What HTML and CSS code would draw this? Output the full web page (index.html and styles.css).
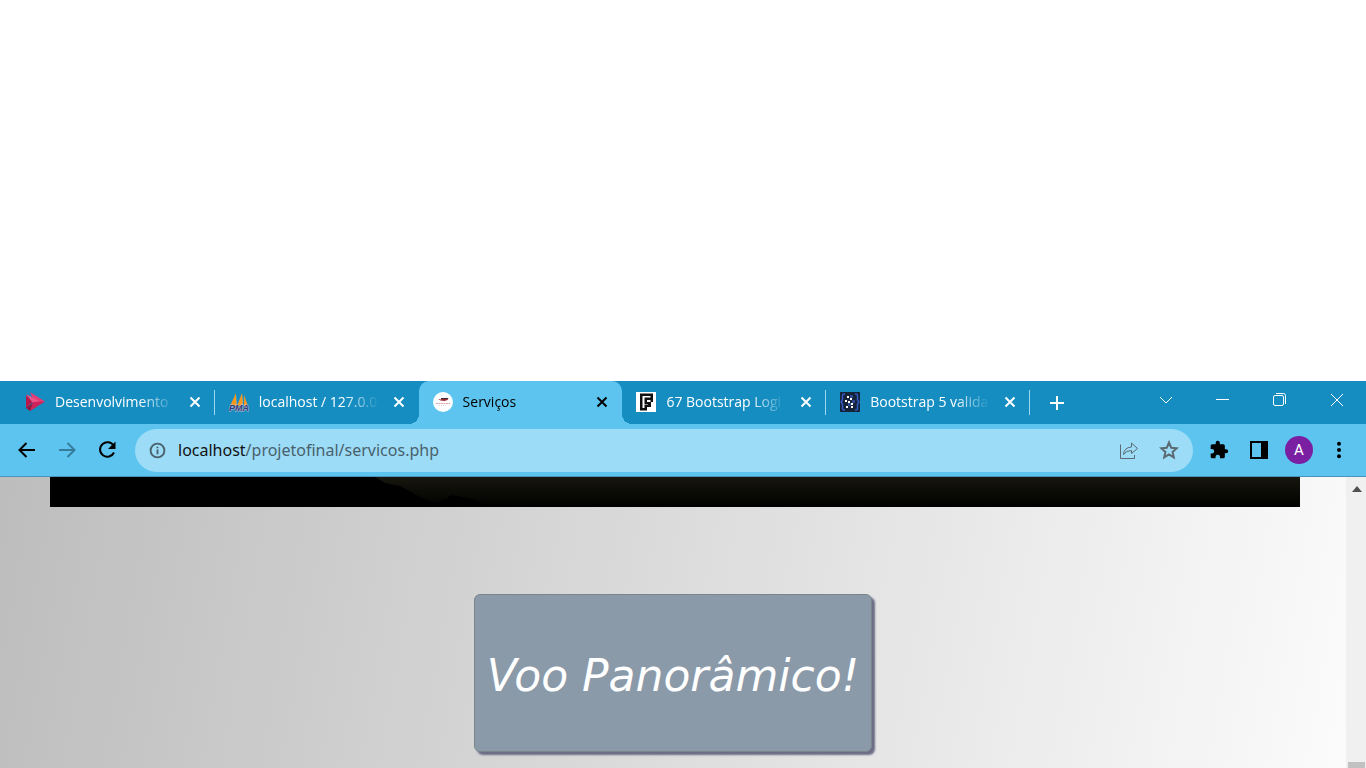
FILE: index.html
```html
<!DOCTYPE html>
<html lang="pt">
<head>
<meta charset="utf-8">
<title>Serviços</title>
<link rel="stylesheet" href="styles.css">
</head>
<body>
<div class="browser">
  <header class="tab-bar">
    <nav class="tabs" aria-label="Separadores">
      <div class="tab">
        <svg class="favicon" viewBox="0 0 20 20" aria-hidden="true"><path fill="#e23d74" d="M5 0l15 9.500-10 2z"/><path fill="#b9184c" d="M1 3l7 7-7 6z"/><path fill="#ef5287" d="M1 2l13 7-6 2z"/><path fill="#8e183f" d="M1 16l7-5 2 2-5 6z"/><path fill="#cf225b" d="M5 19L20 9.500 8 10z"/></svg>
        <a class="tab-title" href="#">Desenvolvimento</a>
        <button class="tab-close" aria-label="Fechar"><svg viewBox="0 0 12 12"><path d="M1.500 1.500l9 9M10.500 1.500l-9 9"/></svg></button>
      </div>
      <div class="tab">
        <svg class="favicon" viewBox="0 0 20 20" aria-hidden="true"><path fill="#f7981d" d="M7 1L1 14h6zM13 1L8 14h6zM15 3l4 11h-4z"/><path fill="#c9b28b" d="M8 3v11H7zM14 2v12h-1z"/><text class="pma" x="0" y="19">PMA</text></svg>
        <a class="tab-title" href="#">localhost / 127.0.0</a>
        <button class="tab-close" aria-label="Fechar"><svg viewBox="0 0 12 12"><path d="M1.500 1.500l9 9M10.500 1.500l-9 9"/></svg></button>
      </div>
      <div class="tab active">
        <svg class="favicon" viewBox="0 0 20 20" aria-hidden="true"><circle cx="10" cy="10" r="10" fill="#fff"/><path fill="#a32632" d="M5 7l3 .5 1.500-1.500 3 .5 3-.5-1 2-3 1-4-.5z"/><path stroke="#333" d="M8 6.500h7"/><path stroke="#e0a5aa" stroke-dasharray="2 .5" d="M3 11.500h14"/><path stroke="#ddd" stroke-dasharray="1 1" d="M6 13.500h8"/></svg>
        <a class="tab-title" href="#">Serviços</a>
        <button class="tab-close" aria-label="Fechar"><svg viewBox="0 0 12 12"><path d="M1.500 1.500l9 9M10.500 1.500l-9 9"/></svg></button>
      </div>
      <div class="tab">
        <svg class="favicon" viewBox="0 0 20 20" aria-hidden="true"><path fill="#fff" d="M0 0h20v20H0z"/><path fill="#111" fill-rule="evenodd" d="M4 1.500h13V10h-2v5h-4v3.500H4zM6.500 4v12H8.500v-3.500H12V10h2.500V4z"/><path fill="#111" d="M8.500 5.500H15V8h-4v2h2v2H8.500z"/></svg>
        <a class="tab-title" href="#">67 Bootstrap Logi</a>
        <button class="tab-close" aria-label="Fechar"><svg viewBox="0 0 12 12"><path d="M1.500 1.500l9 9M10.500 1.500l-9 9"/></svg></button>
      </div>
      <div class="tab">
        <svg class="favicon" viewBox="0 0 20 20" aria-hidden="true"><path fill="#172338" d="M0 0h20v20H0z"/><path fill="none" stroke="#3159c5" stroke-width="1.500" d="M5 2H4Q2.500 2 2.500 4v4L1 10l1.500 2v4q0 2 1.500 2h1M15 2h1q1.500 0 1.500 2v4l1.500 2-1.500 2v4q0 2-1.500 2h-1"/><path fill="#304a91" d="M10 3h3v3h-3zM12 8h3v3h-3zM8 11h3v3H8z"/><path fill="#fff" d="M7 4h2v2H7zM10 6h2v2h-2zM5 8h2v2H5zM8 9h2v2H8zM11 11h2v2h-2zM6 14h2v2H6zM11 14h2v2h-2z"/></svg>
        <a class="tab-title" href="#">Bootstrap 5 valida</a>
        <button class="tab-close" aria-label="Fechar"><svg viewBox="0 0 12 12"><path d="M1.500 1.500l9 9M10.500 1.500l-9 9"/></svg></button>
      </div>
    </nav>
    <button class="new-tab" aria-label="Novo separador"><svg viewBox="0 0 16 16"><path d="M8 1v14M1 8h14"/></svg></button>
    <div class="window-controls">
      <button aria-label="Pesquisar separadores"><svg viewBox="0 0 14 14"><path d="M1 4l6 6 6-6"/></svg></button>
      <button aria-label="Minimizar"><svg viewBox="0 0 14 14"><path d="M0 6.500h13"/></svg></button>
      <button aria-label="Restaurar"><svg viewBox="0 0 14 14"><rect x=".5" y="2.500" width="10" height="10" rx="1.500"/><path d="M3 .5h7.500q2 0 2 2V11"/></svg></button>
      <button aria-label="Fechar janela"><svg viewBox="0 0 14 14"><path d="M1 1l12 12M13 1L1 13"/></svg></button>
    </div>
  </header>

  <div class="toolbar">
    <button class="tool" aria-label="Retroceder"><svg viewBox="0 0 20 20"><path d="M18 10H3M9.500 3L2.500 10l7 7"/></svg></button>
    <button class="tool muted" aria-label="Avançar"><svg viewBox="0 0 20 20"><path d="M2 10h15M10.500 3l7 7-7 7"/></svg></button>
    <button class="tool" aria-label="Atualizar"><svg viewBox="0 0 20 20"><path d="M16.800 6A7.300 7.300 0 1 0 17 12.500"/><path class="solid" d="M18.500 1.500v7.500H11z"/></svg></button>
    <div class="address">
      <svg class="info" viewBox="0 0 18 18" aria-hidden="true"><circle cx="9" cy="9" r="7.300"/><path d="M9 8v5M9 5v1.500"/></svg>
      <a class="url" href="#"><span class="host">localhost</span>/projetofinal/servicos.php</a>
      <button class="address-tool share" aria-label="Partilhar"><svg viewBox="0 0 20 20"><path d="M1.500 4.500v14h14V15M4.500 14.500q.5-7 8-7.500V3l6 5.500-6 5v-3q-5.500 0-8 4z"/></svg></button>
      <button class="address-tool" aria-label="Adicionar aos favoritos"><svg viewBox="0 0 20 20"><path d="M10 2.500l2.200 5.200 5.600.5-4.200 3.700 1.200 5.500-4.800-2.900-4.800 2.900 1.200-5.500-4.200-3.700 5.600-.5z"/></svg></button>
    </div>
    <button class="tool" aria-label="Extensões"><svg viewBox="0 0 24 24"><path class="solid" d="M20.500 11H19V7a2 2 0 0 0-2-2h-4V3.500a2.500 2.500 0 0 0-5 0V5H4a2 2 0 0 0-2 2v3.800h1.500a2.700 2.700 0 0 1 0 5.400H2V20a2 2 0 0 0 2 2h3.800v-1.500a2.700 2.700 0 0 1 5.400 0V22H17a2 2 0 0 0 2-2v-4h1.500a2.500 2.500 0 0 0 0-5z"/></svg></button>
    <button class="tool" aria-label="Painel lateral"><svg viewBox="0 0 20 20"><path class="solid" fill-rule="evenodd" d="M1 1h18v18H1zM3 3v14h9V3z"/></svg></button>
    <button class="avatar" aria-label="Perfil">A</button>
    <button class="tool" aria-label="Menu"><svg viewBox="0 0 20 20"><circle class="solid" cx="10" cy="3.800" r="2"/><circle class="solid" cx="10" cy="10" r="2"/><circle class="solid" cx="10" cy="16.200" r="2"/></svg></button>
  </div>

  <div class="viewport">
    <main class="page">
      <svg class="banner" viewBox="0 0 1250 30" preserveAspectRatio="none" aria-hidden="true">
        <defs><linearGradient id="dusk" x2="0" y2="1"><stop offset="0" stop-color="#17170e"/><stop offset="1" stop-color="#000"/></linearGradient></defs>
        <path fill="url(#dusk)" d="M0 0h1250v30H0z"/>
        <path fill="#000" d="M0 0h325l10 6 15 3 20 11 12 5h8l12-7 20 4 18 8H0z"/>
      </svg>
      <button class="cta">Voo Panorâmico!</button>
    </main>
    <div class="scrollbar" aria-hidden="true">
      <svg class="scroll-up" viewBox="0 0 10 6"><path d="M5 0l5 6H0z"/></svg>
      <div class="thumb"></div>
    </div>
  </div>
</div>
</body>
</html>
```
FILE: styles.css
```css
* { box-sizing: border-box; }
body {
  margin: 0;
  min-height: 100vh;
  display: flex;
  flex-direction: column;
  padding-top: 381px;
  background: #fff;
  font-family: "Open Sans", "Noto Sans", sans-serif;
}
button {
  margin: 0;
  padding: 0;
  border: 0;
  background: none;
  color: inherit;
  font: inherit;
}
a { color: inherit; text-decoration: none; }
svg { display: block; }
.browser { flex: 1; display: flex; flex-direction: column; }

.tab-bar {
  display: flex;
  height: 43px;
  padding-left: 11px;
  background: #158dc1;
  color: #fff;
}
.tabs { display: flex; flex: 0 1 1019px; min-width: 0; }
.tab {
  position: relative;
  flex: 1 1 0;
  min-width: 0;
  display: flex;
  align-items: center;
  padding: 0 14px 1px;
}
.tab::after {
  content: "";
  position: absolute;
  right: 0;
  top: 9px;
  width: 1px;
  height: 25px;
  background: #9bd9f3;
}
.favicon { flex: none; width: 20px; height: 20px; }
.pma {
  font: italic bold 9px "Liberation Sans", sans-serif;
  fill: #353c78;
  stroke: #b9bed4;
  stroke-width: 1px;
  paint-order: stroke;
}
.tab-title {
  flex: 1;
  min-width: 0;
  margin: 0 14px 0 10px;
  white-space: nowrap;
  font-size: 14px;
  line-height: 20px;
  mask-image: linear-gradient(to right, #000 calc(100% - 36px), transparent);
}
.tab-close { flex: none; width: 12px; }
.tab-close svg { width: 12px; height: 12px; }
.tab-close path { fill: none; stroke: currentColor; stroke-width: 2; }
.active {
  background: #5cc4ef;
  color: #000;
  border-radius: 10px 10px 0 0;
}
.active::before, .active::after {
  content: "";
  position: absolute;
  top: auto;
  bottom: 0;
  width: 10px;
  height: 10px;
}
.active::before {
  left: -10px;
  background: radial-gradient(circle at 0 0, transparent 10px, #5cc4ef 10px);
}
.active::after {
  right: -10px;
  background: radial-gradient(circle at 100% 0, transparent 10px, #5cc4ef 10px);
}
.tab:has(+ .active)::after { display: none; }
.new-tab { width: 32px; padding-left: 11px; margin-left: 8px; }
.new-tab svg { width: 16px; height: 16px; }
.new-tab path { stroke: currentColor; stroke-width: 2; }
.window-controls { display: flex; margin-left: auto; height: 38px; padding-right: 1px; }
.window-controls button { width: 57px; display: grid; place-items: center; }
.window-controls svg { width: 14px; height: 14px; fill: none; stroke: #fff; }

.toolbar {
  display: flex;
  align-items: center;
  height: 53px;
  padding: 0 7px;
  background: #5cc4ef;
  border-bottom: 1px solid #4796b7;
  color: #000;
}
.tool { flex: none; width: 40px; height: 40px; display: grid; place-items: center; }
.tool svg {
  width: 20px;
  height: 20px;
  fill: none;
  stroke: currentColor;
  stroke-width: 2;
}
.tool .solid { fill: currentColor; stroke: none; }
.muted { color: #357b9b; }
.address {
  flex: 1;
  min-width: 0;
  display: flex;
  align-items: center;
  gap: 12px;
  height: 43px;
  margin: 0 6px 0 8px;
  padding: 0 14px;
  border-radius: 22px;
  background: #9cdcf7;
  color: #49616c;
}
.info { width: 17px; height: 17px; fill: none; stroke: #49616c; stroke-width: 2; }
.url { flex: 1; font-family: "Noto Sans", sans-serif; font-size: 16px; line-height: 24px; white-space: nowrap; }
.host { color: #111; }
.address-tool { width: 20px; }
.share { margin-right: 8px; }
.address-tool svg {
  width: 20px;
  height: 20px;
  fill: none;
  stroke: #5b6a71;
  stroke-width: 2;
}
.address .share svg { stroke-width: 1; }
.avatar {
  flex: none;
  width: 28px;
  height: 28px;
  margin: 0 6px;
  border-radius: 50%;
  background: #7b1fa2;
  color: #fff;
  font: 15px/28px Roboto, sans-serif;
}

.viewport { flex: 1; display: flex; }
.page {
  flex: 1;
  min-width: 0;
  display: flex;
  flex-direction: column;
  align-items: center;
  background: linear-gradient(100deg, #bdbdbd, #fbfbfb);
}
.banner { align-self: stretch; width: auto; height: 30px; margin: 0 46px 0 50px; }
.cta {
  margin: 87px 0 16px;
  padding: 54px 12px 48px;
  border: 1px solid #7d858c;
  border-radius: 6px;
  background: #8b9aa9;
  box-shadow: 3px 3px 2px #6c6c85;
  color: #fff;
  font: italic 44px/54px "DejaVu Sans", sans-serif;
}
.scrollbar {
  width: 20px;
  display: flex;
  flex-direction: column;
  align-items: center;
  justify-content: space-between;
  padding: 9px 1px 0 2px;
  background: #f0f0f0;
}
.scroll-up { width: 10px; height: 6px; fill: #505050; }
.thumb { width: 17px; height: 6px; background: #c1c1c1; }
```
